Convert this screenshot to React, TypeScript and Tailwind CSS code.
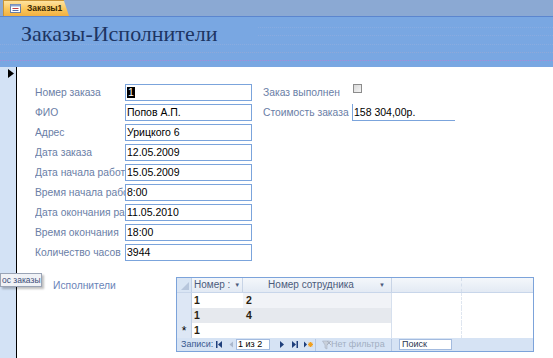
import React from "react";

const labels: [string, string][] = [
  ["Номер заказа", "1"],
  ["ФИО", "Попов А.П."],
  ["Адрес", "Урицкого 6"],
  ["Дата заказа", "12.05.2009"],
  ["Дата начала работ", "15.05.2009"],
  ["Время начала работ", "8:00"],
  ["Дата окончания работ", "11.05.2010"],
  ["Время окончания", "18:00"],
  ["Количество часов", "3944"],
];

function Dotted({ color }: { color: string }) {
  return <div className={`h-0 border-t border-dotted ${color}`} />;
}

function NavFirst() {
  return (
    <svg width="6" height="7" viewBox="0 0 6 7">
      <rect x="0" y="0" width="1.5" height="7" fill="#1e3f7c" />
      <polygon points="6,0 6,7 2,3.5" fill="#1e3f7c" />
    </svg>
  );
}
function NavPrev() {
  return (
    <svg width="4" height="7" viewBox="0 0 4 7">
      <polygon points="4,0.5 4,6.5 0.5,3.5" fill="#a9b7cc" />
    </svg>
  );
}
function NavNext() {
  return (
    <svg width="4" height="7" viewBox="0 0 4 7">
      <polygon points="0,0 0,7 4,3.5" fill="#1e3f7c" />
    </svg>
  );
}
function NavLast() {
  return (
    <svg width="6" height="7" viewBox="0 0 6 7">
      <polygon points="0,0 0,7 4,3.5" fill="#1e3f7c" />
      <rect x="4.5" y="0" width="1.5" height="7" fill="#1e3f7c" />
    </svg>
  );
}
function NavNew() {
  return (
    <svg width="9" height="7" viewBox="0 0 9 7">
      <polygon points="0,0.5 0,6.5 3,3.5" fill="#1e3f7c" />
      <g stroke="#f0a020" strokeWidth="1.2">
        <line x1="6.5" y1="1" x2="6.5" y2="6" />
        <line x1="4" y1="3.5" x2="9" y2="3.5" />
        <line x1="4.7" y1="1.7" x2="8.3" y2="5.3" />
        <line x1="8.3" y1="1.7" x2="4.7" y2="5.3" />
      </g>
    </svg>
  );
}
function FilterIcon() {
  return (
    <svg width="9" height="10" viewBox="0 0 9 10">
      <polygon points="0.5,1 7.5,1 5,5 5,9 3,8 3,5" fill="#c9d0da" stroke="#a8b2c2" strokeWidth="0.6" />
      <line x1="5" y1="1" x2="9" y2="5" stroke="#aab3c2" strokeWidth="1" />
      <line x1="9" y1="1" x2="5" y2="5" stroke="#aab3c2" strokeWidth="1" />
    </svg>
  );
}

export default function App() {
  return (
    <div className="relative w-[553px] h-[358px] overflow-hidden bg-white font-['Liberation_Sans',sans-serif]">
      {/* tab strip */}
      <div className="h-[16px] bg-[#8ba9d3] flex items-end pl-[3px]">
        <div className="h-[16px] w-[66px] bg-gradient-to-b from-[#fde3a0] via-[#fbc95e] to-[#f2b040] border-l border-t border-[#c99435] [clip-path:polygon(0_0,92%_0,100%_100%,0_100%)] flex items-center pl-[6px] gap-[6px]">
          <svg width="11" height="9" viewBox="0 0 11 9">
            <rect x="0.5" y="0.5" width="10" height="8" fill="#ffffff" stroke="#6b7fa6" />
            <rect x="0.5" y="0.5" width="10" height="2" fill="#8aa4d0" />
            <line x1="2.5" y1="4.5" x2="8.5" y2="4.5" stroke="#c04040" />
            <line x1="2.5" y1="6.5" x2="8.5" y2="6.5" stroke="#5570a8" />
          </svg>
          <span className="text-[8.5px] font-bold text-[#3a2a05] leading-none">Заказы1</span>
        </div>
      </div>
      <div className="h-px bg-[#5b86cf]" />
      {/* header */}
      <div className="h-[50px] bg-[#79a7e2] flex flex-col">
        <div className="flex items-start h-[27px]">
          <div className="pl-[21px] pt-[6px] font-['Liberation_Serif',serif] text-[22px] leading-[22px] text-[#1d3563] whitespace-nowrap">
            Заказы-Исполнители
          </div>
          <div className="flex-1 flex flex-col gap-[7px] pt-[10px] pl-[40px]">
            <Dotted color="border-[#88ace2]" />
            <Dotted color="border-[#8aabe0]" />
          </div>
        </div>
        <div className="flex flex-col gap-[7px]">
          <Dotted color="border-[#8aace0]" />
          <Dotted color="border-[#90a9d8]" />
          <Dotted color="border-[#a88cd6]" />
        </div>
      </div>
      {/* body */}
      <div className="flex h-[291px]">
        <div className="w-[17px] bg-[#d3e2f5] border-r border-black pt-[2px] pl-[8px]">
          <svg width="6" height="9" viewBox="0 0 6 9">
            <polygon points="0,0 0,9 6,4.5" fill="#000" />
          </svg>
        </div>
        <div className="flex-1 flex flex-col pt-[17px] pl-[18px]">
          <div className="flex gap-[11px]">
            {/* left column */}
            <div className="flex flex-col gap-[3px]">
              {labels.map(([l, v], i) => (
                <div key={i} className="flex items-center h-[17px]">
                  <div className="w-[90px] overflow-hidden whitespace-nowrap text-[10.3px] leading-[12px] text-[#6a7ea6]">
                    {l}
                  </div>
                  <div className="w-[127px] h-[17px] border border-[#7ba4dc] flex items-center pl-[1px] text-[10.5px] leading-none text-black">
                    {i === 0 ? (
                      <span className="bg-black text-white px-[1px]">{v}</span>
                    ) : (
                      v
                    )}
                  </div>
                </div>
              ))}
            </div>
            {/* right column */}
            <div className="flex flex-col gap-[3px]">
              <div className="flex items-center h-[17px]">
                <div className="w-[90px] whitespace-nowrap text-[10.3px] leading-[12px] text-[#6a7ea6]">
                  Заказ выполнен
                </div>
                <div className="self-start w-[9px] h-[9px] border border-[#8c8c8c] bg-gradient-to-br from-[#d8d8d8] to-[#f4f4f4]" />
              </div>
              <div className="flex items-center h-[17px]">
                <div className="w-[89px] whitespace-nowrap text-[10.3px] leading-[12px] text-[#6a7ea6]">
                  Стоимость заказа
                </div>
                <div className="w-[103px] h-[17px] border-l border-b border-[#7ba4dc] flex items-center pl-[1px] text-[10.5px] leading-none text-black">
                  158 304,00р.
                </div>
              </div>
            </div>
          </div>
          {/* subform row */}
          <div className="flex mt-[16px]">
            <div className="w-[141px] pl-[18px] pt-[3px] text-[10.3px] leading-[12px] text-[#6a84b8]">
              Исполнители
            </div>
            <div className="w-[358px] h-[75px] border border-[#7ca3da] flex flex-col bg-white">
              {/* header */}
              <div className="flex h-[15px] bg-gradient-to-b from-[#f4f7fb] to-[#e3eaf4] border-b border-[#c8d6ea]">
                <div className="w-[15px] bg-[#d9e5f4] border-r border-[#c0d0e6] flex items-end justify-end p-[2px]">
                  <svg width="8" height="8" viewBox="0 0 8 8">
                    <polygon points="8,0 8,8 0,8" fill="#b7c6dc" />
                  </svg>
                </div>
                <div className="w-[51px] border-r border-[#c8d4e6] flex items-center pl-[2px] gap-[4px] text-[10px] leading-none text-[#4b5b7b] whitespace-nowrap overflow-hidden">
                  Номер :<span className="text-[6px]">▼</span>
                </div>
                <div className="w-[149px] border-r border-[#c8d4e6] flex items-center text-[10px] leading-none text-[#4b5b7b]">
                  <span className="flex-1 text-center">Номер сотрудника</span>
                  <span className="text-[6px] pr-[6px]">▼</span>
                </div>
                <div className="w-[70px] border-r border-dashed border-[#d4deec]" />
                <div className="flex-1" />
              </div>
              {/* rows */}
              {[
                ["1", "2", ""],
                ["1", "4", ""],
                ["1", "", "*"],
              ].map((r, i) => (
                <div key={i} className="flex h-[15px] text-[10.5px] font-bold leading-none text-[#2a1e10]">
                  <div className="w-[15px] bg-[#dde7f5] border-r border-[#c0d0e6] flex items-center justify-center text-[12px] font-normal text-black">
                    {r[2]}
                  </div>
                  <div className={`w-[51px] flex items-center pl-[2px] ${i === 1 ? "bg-[#e6e9ee]" : "bg-white"}`}>
                    {r[0]}
                  </div>
                  <div className={`w-[149px] flex items-center pl-[3px] border-r border-[#d6e0ee] ${i === 2 ? "bg-white" : i === 1 ? "bg-[#e6e9ee]" : "bg-[#f1f3f7]"}`}>
                    {r[1]}
                  </div>
                  <div className="w-[70px] border-r border-dashed border-[#dfe6f0]" />
                  <div className="flex-1" />
                </div>
              ))}
              {/* nav bar */}
              <div className="flex-1 bg-[#d6e3f4] flex items-center pl-[4px] text-[9px] leading-none text-[#3b5a90] whitespace-nowrap">
                <span className="w-[35px]">Записи:</span>
                <span className="w-[13px] flex"><NavFirst /></span>
                <span className="w-[7px] flex"><NavPrev /></span>
                <div className="w-[34px] h-[11px] bg-white border border-[#a3bbdf] flex items-center pl-[1px] text-black text-[9px]">
                  1 из 2
                </div>
                <span className="w-[10px]" />
                <span className="w-[12px] flex"><NavNext /></span>
                <span className="w-[12px] flex"><NavLast /></span>
                <span className="w-[11px] flex"><NavNew /></span>
                <div className="w-px h-[12px] bg-[#b6c8e2] mr-[6px]" />
                <span className="w-[9px] flex"><FilterIcon /></span>
                <span className="w-[60px] text-[#a2afc2]">Нет фильтра</span>
                <div className="w-px h-[12px] bg-[#b6c8e2] mr-[7px]" />
                <div className="w-[53px] h-[11px] bg-white border border-[#a3bbdf] flex items-center pl-[2px] text-[9px] text-[#2a3550]">
                  Поиск
                </div>
              </div>
            </div>
          </div>
        </div>
      </div>
      {/* floating label over the record strip */}
      <div className="absolute left-0 top-[273px] w-[42px] h-[14px] bg-[#f0f2f6] border border-[#9aa4b6] shadow-[2px_2px_2px_rgba(0,0,0,0.25)] overflow-hidden flex items-center pl-[1px] text-[8.5px] leading-none text-[#3c4d78] whitespace-nowrap">
        ос заказы
      </div>
    </div>
  );
}
